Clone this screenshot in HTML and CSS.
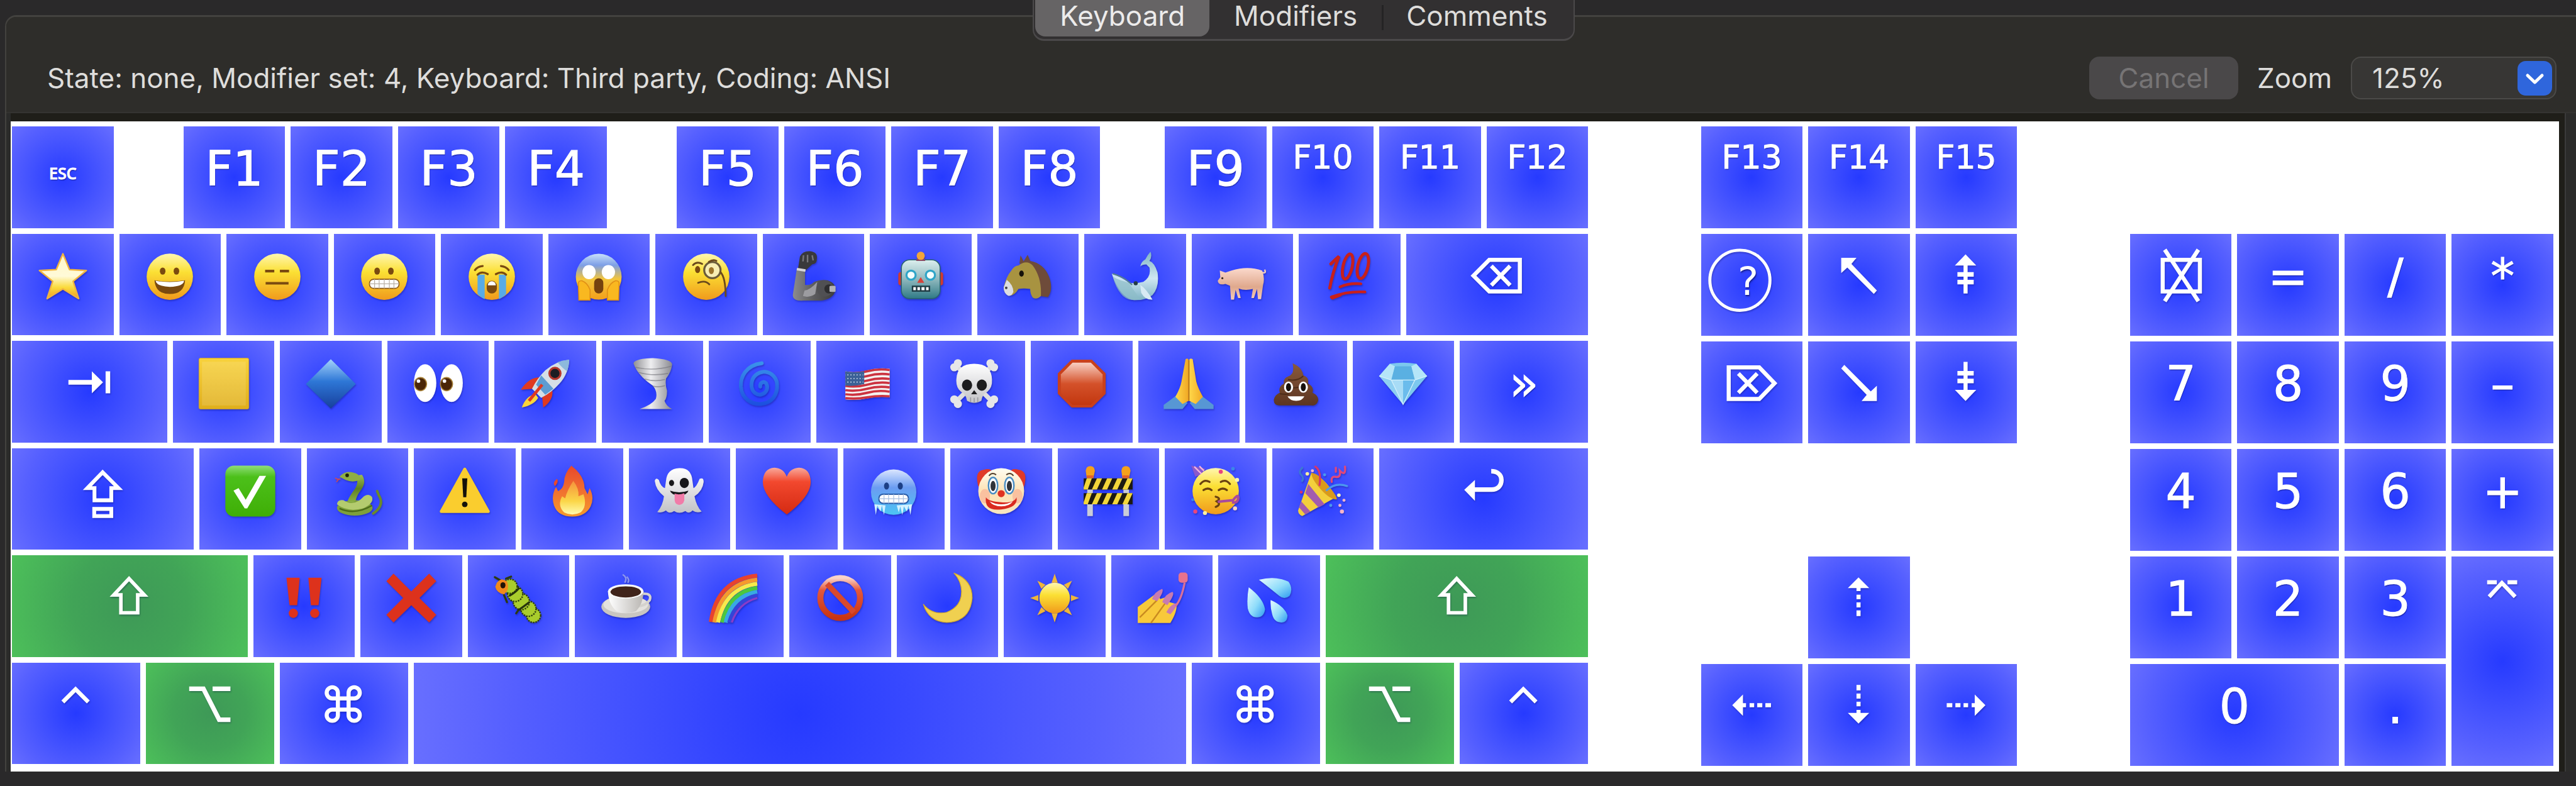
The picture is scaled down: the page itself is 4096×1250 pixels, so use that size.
FILE: index.html
```html
<!DOCTYPE html>
<html lang="en">
<head>
<meta charset="utf-8">
<title>Keyboard layout</title>
<link rel="stylesheet" href="styles.css">
</head>
<body>
<svg class="defs" width="0" height="0" aria-hidden="true">
  <defs>
    <linearGradient id="gFace" x1="0" y1="0" x2="0" y2="1"><stop offset="0" stop-color="#fff6b0"/><stop offset=".4" stop-color="#fbe034"/><stop offset="1" stop-color="#f09a1c"/></linearGradient>
    <linearGradient id="gStar" x1="0" y1="0" x2="0" y2="1"><stop offset="0" stop-color="#fff7c8"/><stop offset=".5" stop-color="#fffad8"/><stop offset=".75" stop-color="#fadb3c"/><stop offset="1" stop-color="#ee9c22"/></linearGradient>
    <linearGradient id="gScream" x1="0" y1="0" x2="0" y2="1"><stop offset="0" stop-color="#c8e0fa"/><stop offset=".25" stop-color="#7d9fe6"/><stop offset=".55" stop-color="#f4c53a"/><stop offset="1" stop-color="#f2a01c"/></linearGradient>
    <linearGradient id="gCold" x1="0" y1="0" x2="0" y2="1"><stop offset="0" stop-color="#dbe6ff"/><stop offset=".4" stop-color="#6b9cf2"/><stop offset="1" stop-color="#4cc4f4"/></linearGradient>
    <linearGradient id="gGold" x1="0" y1="0" x2="0" y2="1"><stop offset="0" stop-color="#f8d23c"/><stop offset="1" stop-color="#dfae1c"/></linearGradient>
    <linearGradient id="gBlue" x1="0" y1="0" x2="0" y2="1"><stop offset="0" stop-color="#a5d3fb"/><stop offset=".45" stop-color="#2e77d6"/><stop offset="1" stop-color="#173f9c"/></linearGradient>
    <linearGradient id="gSteel" x1="0" y1="0" x2="1" y2="0"><stop offset="0" stop-color="#8c8c8e"/><stop offset=".5" stop-color="#5b5b5d"/><stop offset="1" stop-color="#3c3c3e"/></linearGradient>
    <linearGradient id="gRobot" x1="0" y1="0" x2="0" y2="1"><stop offset="0" stop-color="#dcefee"/><stop offset=".5" stop-color="#8fb8bd"/><stop offset="1" stop-color="#2f7a86"/></linearGradient>
    <linearGradient id="gWhale" x1="0" y1="0" x2="0" y2="1"><stop offset="0" stop-color="#7fb5c4"/><stop offset=".55" stop-color="#cfe6f2"/><stop offset="1" stop-color="#7fb4c4"/></linearGradient>
    <linearGradient id="gPig" x1="0" y1="0" x2="0" y2="1"><stop offset="0" stop-color="#fbd9cc"/><stop offset=".6" stop-color="#dfa88c"/><stop offset="1" stop-color="#f7cdbb"/></linearGradient>
    <linearGradient id="gTornado" x1="0" y1="0" x2="1" y2="0"><stop offset="0" stop-color="#8f8f93"/><stop offset=".45" stop-color="#eeeef0"/><stop offset="1" stop-color="#8a8a90"/></linearGradient>
    <linearGradient id="gCyclone" x1="0" y1="0" x2="0" y2="1"><stop offset="0" stop-color="#3a92ea"/><stop offset="1" stop-color="#1c50e0"/></linearGradient>
    <linearGradient id="gBone" x1="0" y1="0" x2="0" y2="1"><stop offset="0" stop-color="#ffffff"/><stop offset="1" stop-color="#c2c2c6"/></linearGradient>
    <linearGradient id="gStop" x1="0" y1="0" x2="0" y2="1"><stop offset="0" stop-color="#f8cfc2"/><stop offset=".5" stop-color="#d4512a"/><stop offset="1" stop-color="#c2370f"/></linearGradient>
    <linearGradient id="gHand" x1="0" y1="0" x2="1" y2="0"><stop offset="0" stop-color="#ffd84a"/><stop offset="1" stop-color="#f0a824"/></linearGradient>
    <linearGradient id="gPoop" x1="0" y1="0" x2="0" y2="1"><stop offset="0" stop-color="#8a5a3c"/><stop offset="1" stop-color="#5c3521"/></linearGradient>
    <linearGradient id="gCheck" x1="0" y1="0" x2="0" y2="1"><stop offset="0" stop-color="#8fdd78"/><stop offset=".22" stop-color="#4cc01a"/><stop offset="1" stop-color="#3fae06"/></linearGradient>
    <linearGradient id="gSnake" x1="0" y1="0" x2="0" y2="1"><stop offset="0" stop-color="#9cbd52"/><stop offset=".5" stop-color="#5f7f22"/><stop offset="1" stop-color="#8db246"/></linearGradient>
    <linearGradient id="gFire" x1="0" y1="0" x2="0" y2="1"><stop offset="0" stop-color="#e8482c"/><stop offset=".5" stop-color="#f07030"/><stop offset="1" stop-color="#f59a2c"/></linearGradient>
    <linearGradient id="gFlame" x1="0" y1="0" x2="0" y2="1"><stop offset="0" stop-color="#f5923c"/><stop offset=".6" stop-color="#fbd648"/><stop offset="1" stop-color="#fffbb0"/></linearGradient>
    <linearGradient id="gHeart" x1="0" y1="0" x2="0" y2="1"><stop offset="0" stop-color="#f9a99c"/><stop offset=".3" stop-color="#f2482e"/><stop offset="1" stop-color="#d42a12"/></linearGradient>
    <linearGradient id="gClown" x1="0" y1="0" x2="0" y2="1"><stop offset="0" stop-color="#fffdf2"/><stop offset=".5" stop-color="#ffe3b4"/><stop offset="1" stop-color="#f6e6c0"/></linearGradient>
    <linearGradient id="gCup" x1="0" y1="0" x2="1" y2="0"><stop offset="0" stop-color="#ffffff"/><stop offset="1" stop-color="#b9b6b2"/></linearGradient>
    <linearGradient id="gBan" x1="0" y1="0" x2="0" y2="1"><stop offset="0" stop-color="#fad3c8"/><stop offset=".3" stop-color="#e4583c"/><stop offset="1" stop-color="#c83412"/></linearGradient>
    <linearGradient id="gDrop" x1="0" y1="0" x2="1" y2="1"><stop offset="0" stop-color="#e8fbff"/><stop offset=".55" stop-color="#8edcfa"/><stop offset="1" stop-color="#2d9af0"/></linearGradient>
    <circle id="face" cx="50" cy="50" r="45.5" fill="url(#gFace)"/>
    <g id="dash-arrow" fill="#fff"><path d="M0-38L21-17H4V-11H-4V-17H-21z"/><path d="M-4-4h8v9h-8zM-4 11h8v10h-8zM-4 27h8v11h-8z"/></g>
    <path id="shift-arrow" d="M49 12L19 44H33V79H66V44H79z" fill="none" stroke="#fff" stroke-width="7"/>
    <path id="command" d="M38 69V25a11 11 0 1 0-11 11H70a11 11 0 1 0-11-11V69a11 11 0 1 0 11-11H27a11 11 0 1 0 11 11z" fill="none" stroke="#fff" stroke-width="8"/>
    <path id="option" d="M9 17H37L68 78H90M55 17H90" fill="none" stroke="#fff" stroke-width="9"/>
    <path id="control" d="M24 43L49 18L74 43" fill="none" stroke="#fff" stroke-width="8"/>
    <path id="diagonal" d="M15 13H45L35 25 85 77 79 84 27 32 15 43z" fill="#fff"/>
  </defs>
</svg>

<nav class="tabs-bar" aria-label="Views">
  <div class="tabs">
    <button class="tab tab-on" type="button">Keyboard</button>
    <button class="tab" type="button">Modifiers</button>
    <button class="tab tab-split" type="button">Comments</button>
  </div>
</nav>

<main class="panel">
  <div class="toolbar">
    <p class="status">State: none, Modifier set: 4, Keyboard: Third party, Coding: ANSI</p>
    <button class="cancel" type="button" disabled>Cancel</button>
    <label class="zoom-label" for="zoom">Zoom</label>
    <span class="combo">
      <select id="zoom"><option>125%</option></select>
      <svg class="combo-arrow" viewBox="0 0 55 55" aria-hidden="true"><rect width="55" height="55" rx="13" fill="#2f66dc"/><path d="M16 23L27.500 34L39 23" fill="none" stroke="#fff" stroke-width="5" stroke-linecap="round" stroke-linejoin="round"/></svg>
    </span>
  </div>

  <div class="scroller">
    <div class="board">
      <section class="block main-block" aria-label="Main keys">
        <button class="key u100 esc">ESC</button>
        <button class="key u100 f1">F1</button><button class="key u100">F2</button><button class="key u100">F3</button><button class="key u100">F4</button>
        <button class="key u100 f5">F5</button><button class="key u100">F6</button><button class="key u100">F7</button><button class="key u100">F8</button>
        <button class="key u100 f9">F9</button><button class="key u100 small">F10</button><button class="key u100 small">F11</button><button class="key u100 small">F12</button>

        <button class="key u100" aria-label="star"><svg viewBox="-50 -34 200 200"><path d="M50 5L63 36 96 38 70 59 81 93 50 74 19 93 30 59 4 38 37 36z" fill="url(#gStar)" stroke="#f0b440" stroke-width="3" stroke-linejoin="round"/></svg></button>
        <button class="key u100" aria-label="grin"><svg viewBox="-50 -34 200 200"><use href="#face"/><g fill="#7a4a10"><ellipse cx="36" cy="39" rx="5.500" ry="7"/><ellipse cx="63" cy="39" rx="5.500" ry="7"/><path d="M20 57Q50 62 80 57Q78 84 50 84Q22 84 20 57z"/></g><path d="M22 58Q50 63 78 58Q77 69 50 70Q24 69 22 58z" fill="#fff"/></svg></button>
        <button class="key u100" aria-label="expressionless"><svg viewBox="-50 -34 200 200"><use href="#face"/><path d="M26 39H44M55 39H73M27 63H72" stroke="#7a4a10" stroke-width="5"/></svg></button>
        <button class="key u100" aria-label="grimace"><svg viewBox="-50 -34 200 200"><use href="#face"/><g fill="#7a4a10"><ellipse cx="36" cy="39" rx="5.500" ry="7"/><ellipse cx="63" cy="39" rx="5.500" ry="7"/></g><rect x="21" y="55" width="58" height="18" rx="8" fill="#fff" stroke="#8a5a1c" stroke-width="2"/><path d="M21 64H79M31 55V73M40 55V73M50 55V73M60 55V73M69 55V73" stroke="#b9b0a4" stroke-width="1.500"/></svg></button>
        <button class="key u100" aria-label="sob"><svg viewBox="-50 -34 200 200"><use href="#face"/><g fill="#58abe6"><path d="M22 46H36V94Q28 91 22 84z"/><path d="M64 46H78V84Q72 91 64 94z"/></g><path d="M17 37Q22 30 32 29M83 37Q78 30 68 29M22 46Q30 38 42 45M78 46Q70 38 58 45" fill="none" stroke="#7a4a10" stroke-width="4" stroke-linecap="round"/><rect x="40" y="58" width="20" height="25" rx="10" fill="#7a4a10"/><path d="M42 67a8 8 0 0 1 16 0z" fill="#fff"/></svg></button>
        <button class="key u100" aria-label="scream"><svg viewBox="-50 -34 200 200"><circle cx="50" cy="50" r="45" fill="url(#gScream)"/><ellipse cx="31" cy="41" rx="13" ry="14" fill="#fff"/><ellipse cx="69" cy="41" rx="13" ry="14" fill="#fff"/><rect x="41" y="53" width="18" height="30" rx="9" fill="#75420f"/><path d="M11 96L10 66Q9 57 17 58Q28 62 33 76V96zM89 96L90 66Q91 57 83 58Q72 62 67 76V96z" fill="#f9b820" stroke="#e08f16" stroke-width="2"/></svg></button>
        <button class="key u100" aria-label="monocle"><svg viewBox="-50 -34 200 200"><use href="#face"/><ellipse cx="33" cy="36" rx="5" ry="7" fill="#7a4a10"/><circle cx="62" cy="37" r="16" fill="#f7eeb4" stroke="#6b5c3a" stroke-width="4"/><ellipse cx="60" cy="38" rx="5" ry="7" fill="#9c742a"/><path d="M24 27Q32 19 42 25M55 21Q64 15 70 19M34 62Q48 56 56 65M78 41Q88 52 88 88" fill="none" stroke="#6b4a1c" stroke-width="3.500" stroke-linecap="round"/></svg></button>
        <button class="key u100" aria-label="mechanical arm"><svg viewBox="-50 -34 200 200"><path d="M18 34H34L34 66Q44 68 52 60Q64 55 78 57Q94 62 94 76Q90 94 66 97L30 97Q10 98 10 86z" fill="url(#gSteel)"/><path d="M33 77Q44 76 58 60L54 84Q42 92 30 88z" fill="#9c9ca0"/><circle cx="73" cy="73" r="16" fill="#505053"/><circle cx="81" cy="74" r="9" fill="#2d2d2f"/><rect x="82" y="68" width="12" height="12" rx="2" fill="#b4b4b8"/><path d="M20 36L24 10Q30-1 44 0Q60 2 57 16Q58 24 48 26L36 37z" fill="#39393b"/><path d="M31 8L30 20M39 7V22M48 8L50 18" stroke="#77777b" stroke-width="3"/><path d="M18 35L35 38" stroke="#d6d6da" stroke-width="5"/></svg></button>
        <button class="key u100" aria-label="robot"><svg viewBox="-50 -34 200 200"><rect x="6" y="41" width="12" height="26" rx="5" fill="#cf3b30"/><rect x="82" y="41" width="12" height="26" rx="5" fill="#cf3b30"/><rect x="12" y="17" width="76" height="76" rx="16" fill="url(#gRobot)" stroke="#2b6470" stroke-width="2"/><path d="M41 19Q42 11 50 11T59 19z" fill="#8a4860"/><circle cx="50" cy="9" r="8" fill="#f2a53a"/><g fill="#f4ffff" stroke="#2fa5c8" stroke-width="4"><circle cx="31" cy="47" r="9"/><circle cx="69" cy="47" r="9"/></g><path d="M50 51L57 62H43z" fill="#d8423a"/><rect x="34" y="69" width="33" height="9" fill="#fff" stroke="#1f3c44" stroke-width="3"/><path d="M42 69V78M50 69V78M59 69V78" stroke="#1f3c44" stroke-width="3"/></svg></button>
        <button class="key u100" aria-label="horse"><svg viewBox="-50 -34 200 200"><path d="M34 24L36 8 42 20 50 7 55 19Q82 24 92 50Q101 74 90 90L74 88 58 34z" fill="#6e4b3a"/><path d="M32 28Q48 16 60 28Q78 52 76 88Q68 96 60 91Q55 84 55 74Q42 72 32 74Q24 88 13 87Q3 83 3 71Q8 50 18 38Q24 28 32 28z" fill="#a89340"/><path d="M9 56Q22 66 22 80Q18 90 11 87Q3 82 3 71z" fill="#dcdde2"/><ellipse cx="38" cy="44" rx="4.500" ry="6" fill="#16120a"/><circle cx="8" cy="72" r="2.500" fill="#444"/></svg></button>
        <button class="key u100" aria-label="whale"><svg viewBox="-50 -34 200 200"><path d="M80 1Q84 10 78 19Q88 22 94 42Q98 70 84 86Q70 97 48 96Q20 92 4 44Q26 52 38 62Q52 64 66 60Q82 50 78 32L72 26Q64 26 60 30Q62 20 70 16Q74 8 80 1z" fill="url(#gWhale)"/><path d="M6 50Q20 58 38 62Q46 76 60 94Q40 100 26 88Q12 74 6 50z" fill="#8dbcc8" opacity=".7"/><path d="M60 66Q72 74 84 95Q70 96 62 82z" fill="#d8ebf4"/><circle cx="51" cy="63" r="4" fill="#243c44"/><path d="M6 44Q28 50 44 66" fill="none" stroke="#55808c" stroke-width="2.500"/></svg></button>
        <button class="key u100" aria-label="pig"><svg viewBox="-50 -34 200 200"><path d="M28 38Q60 28 88 38Q94 52 90 66L86 94H80L78 74L72 92H67L70 74Q54 78 42 73L46 92H41L36 76L33 95H27L25 68L16 64Q2 68 1 58L6 51L5 38L16 42z" fill="url(#gPig)"/><path d="M88 42Q97 44 93 36" fill="none" stroke="#f4cdbc" stroke-width="3"/><circle cx="10" cy="53" r="2" fill="#3a2a24"/></svg></button>
        <button class="key u100" aria-label="hundred"><svg viewBox="-50 -34 200 200"><g fill="none" stroke="#c8201c" stroke-linecap="round"><path d="M13 25Q22 16 29 10Q16 44 11 72" stroke-width="6"/><ellipse cx="46" cy="30" rx="9" ry="25" transform="rotate(13 46 30)" stroke-width="6"/><ellipse cx="76" cy="29" rx="10" ry="25" transform="rotate(13 76 29)" stroke-width="6"/><path d="M31 70Q50 62 72 64M14 90Q46 78 80 80M16 92L32 86" stroke-width="5.500"/></g></svg></button>
        <button class="key u175" aria-label="delete backward"><svg viewBox="-50 -34 200 200"><path d="M34 17H94V79H34L3 48zM38 29L75 67M75 29L38 67" fill="none" stroke="#fff" stroke-width="8"/></svg></button>

        <button class="key u150" aria-label="tab"><svg viewBox="-50 -34 200 200"><path d="M9 43H55V26L77 47.500 55 69V52H9zM82 26H91V69H82z" fill="#fff"/></svg></button>
        <button class="key u100" aria-label="yellow square"><svg viewBox="-50 -34 200 200"><rect x="1" width="98" height="100" rx="3" fill="url(#gGold)" stroke="#cfa02a"/><rect x="7" y="7" width="86" height="86" fill="#fff" opacity=".12"/></svg></button>
        <button class="key u100" aria-label="blue diamond"><svg viewBox="-50 -34 200 200"><path d="M50 2L99 51 50 99 1 51z" fill="url(#gBlue)"/></svg></button>
        <button class="key u100" aria-label="eyes"><svg viewBox="-50 -34 200 200"><ellipse cx="24" cy="49" rx="22" ry="37" fill="#fff"/><ellipse cx="76" cy="49" rx="22" ry="37" fill="#fff"/><g fill="#4a2608" stroke="#a8823a" stroke-width="2"><ellipse cx="15" cy="51" rx="12" ry="13"/><ellipse cx="66" cy="51" rx="12" ry="13"/></g><circle cx="11" cy="45" r="3.500" fill="#fff"/><circle cx="62" cy="45" r="3.500" fill="#fff"/></svg></button>
        <button class="key u100" aria-label="rocket"><svg viewBox="-50 -34 200 200"><path d="M31 71Q12 74 4 97Q28 92 36 78z" fill="#fbd63a"/><path d="M38 38Q18 38 2 62L26 60zM64 64Q66 82 46 97L44 76z" fill="#e03a20"/><path d="M97 3Q70 6 50 24Q34 40 24 60L42 78Q62 68 78 50Q96 30 97 3z" fill="#d5dfe6"/><path d="M42 34L66 60L50 72L32 52z" fill="#5d9cd2"/><path d="M97 3Q84 4 74 8Q84 20 93 26Q97 14 97 3z" fill="#8db9dc"/><circle cx="69" cy="30" r="11" fill="#1d1d22" stroke="#b4362c" stroke-width="4"/><path d="M18 84L44 52" stroke="#e03a20" stroke-width="6"/></svg></button>
        <button class="key u100" aria-label="tornado"><svg viewBox="-50 -34 200 200"><path d="M12 10Q14 1 50 0Q86 2 88 12Q86 28 76 40Q74 52 78 64Q78 78 73 84Q76 94 88 100H24Q48 92 56 80Q60 66 50 54Q20 34 12 10z" fill="url(#gTornado)"/><path d="M16 18Q50 26 86 16M22 28Q50 36 80 30M34 41Q54 47 74 42M50 55Q62 58 74 54" fill="none" stroke="#737379" stroke-width="2" opacity=".6"/></svg></button>
        <button class="key u100" aria-label="cyclone"><svg viewBox="-50 -34 200 200"><path d="M54 10C22 14 12 38 13 56C15 80 34 91 52 90C74 88 86 72 84 50C82 34 68 26 56 27C38 30 33 44 34 56C36 68 46 74 54 71C64 68 67 58 63 50C58 44 50 48 51 56" fill="none" stroke="url(#gCyclone)" stroke-width="7.500" stroke-linecap="round"/></svg></button>
        <button class="key u100" aria-label="flag"><svg viewBox="-50 -34 200 200"><path d="M7 26Q28 30 50 24T94 21V77Q72 74 50 79T7 81z" fill="#f4f1f0"/><path d="M7 28.500Q28 32 50 26T94 23.500M7 37.500Q28 41 50 35T94 32M7 46Q28 50 50 44T94 41M7 54.500Q28 58 50 52T94 49M7 63Q28 66 50 60T94 57.500M7 71Q28 74 50 68T94 66M7 78.500Q28 81 50 77T94 75" fill="none" stroke="#cc3340" stroke-width="4.500"/><path d="M7 26Q26 30 44 25.500V51Q26 56 7 54z" fill="#3c6196"/><path d="M11 33H42M11 40H42M11 47H42" stroke="#dce6f4" stroke-width="2" stroke-dasharray="2 4"/></svg></button>
        <button class="key u100" aria-label="skull"><svg viewBox="-50 -34 200 200"><path d="M14 14L86 86M86 14L14 86" stroke="#dededf" stroke-width="9"/><g fill="#e6e6e8"><circle cx="11" cy="18" r="8"/><circle cx="18" cy="10" r="8"/><circle cx="82" cy="10" r="8"/><circle cx="89" cy="18" r="8"/><circle cx="11" cy="81" r="8"/><circle cx="18" cy="90" r="8"/><circle cx="82" cy="90" r="8"/><circle cx="89" cy="81" r="8"/></g><path d="M15 42Q16 11 50 11T85 42Q86 58 76 66Q66 70 64 84Q50 92 36 84Q34 70 24 66Q14 58 15 42z" fill="url(#gBone)"/><ellipse cx="36" cy="53" rx="10" ry="11" fill="#1c1c1e"/><ellipse cx="65" cy="53" rx="10" ry="11" fill="#1c1c1e"/><path d="M50 63L56 71H44z" fill="#1c1c1e"/><path d="M43 77V87M50 78V88M57 77V87" stroke="#9a9aa0" stroke-width="2"/></svg></button>
        <button class="key u100" aria-label="stop"><svg viewBox="-50 -34 200 200"><path d="M30 3H70L97 30V70L70 97H30L3 70V30z" fill="#c8401c"/><path d="M32 9H68L91 32V69L68 92H32L9 69V32z" fill="url(#gStop)"/></svg></button>
        <button class="key u100" aria-label="folded hands"><svg viewBox="-50 -34 200 200"><path d="M28 72L48 88L38 100H1V92zM73 72L52 88L62 100H99V92z" fill="#5797d4"/><path d="M44 2Q49-1 50 4V84L38 90L24 76Q34 58 36 46z" fill="url(#gHand)"/><path d="M58 2Q52-1 51 4V84L64 90L78 76Q68 58 65 46z" fill="url(#gHand)"/><path d="M50.500 4V84" stroke="#b8761c" stroke-width="2.500"/></svg></button>
        <button class="key u100" aria-label="poop"><svg viewBox="-50 -34 200 200"><path d="M43 10Q62 18 64 34Q76 38 73 50Q86 56 82 68Q95 74 93 84Q90 94 80 93H18Q6 93 6 82Q8 72 18 68Q14 56 26 50Q24 40 34 36Q48 32 43 10z" fill="url(#gPoop)"/><path d="M34 42Q52 46 64 35M24 57Q50 62 74 51M18 70Q30 72 36 70" fill="none" stroke="#40230f" stroke-width="2.500" opacity=".7"/><g fill="#fff"><ellipse cx="35" cy="57" rx="9" ry="11"/><ellipse cx="64" cy="57" rx="9" ry="11"/><path d="M33 75H66Q62 84 50 84T33 75z"/></g><ellipse cx="35" cy="57" rx="5" ry="8" fill="#17100c"/><ellipse cx="64" cy="57" rx="5" ry="8" fill="#17100c"/></svg></button>
        <button class="key u100" aria-label="gem"><svg viewBox="-50 -34 200 200"><path d="M24 11Q50 7 76 11L97 35 50 91 3 35z" fill="#7cc8ee"/><path d="M24 11L34 16 27 43 3 35zM76 11L66 16 73 43 97 35z" fill="#b5e5f8"/><path d="M34 16H66L73 43H27z" fill="#5ab0e2"/><path d="M27 43H50V91z" fill="#a8dcf6"/><path d="M73 43H50V91z" fill="#6bbcec"/><path d="M3 35L27 43 50 91z" fill="#8fd0f2"/><path d="M3 35L27 43H73L97 35M27 43L50 91 73 43" fill="none" stroke="#d4f1fc" stroke-width="1.500"/></svg></button>
        <button class="key u125">»</button>

        <button class="key u175" aria-label="caps lock"><svg viewBox="-50 -34 200 200"><path d="M49 13L19 44H33V68H66V44H80zM32.500 85H66V99H32.500z" fill="none" stroke="#fff" stroke-width="7.500"/></svg></button>
        <button class="key u100" aria-label="check mark"><svg viewBox="-50 -34 200 200"><rect x="1" width="98" height="100" rx="17" fill="url(#gCheck)"/><path d="M17 49L27 44 41 67 68 20H81L44 84H39z" fill="#fff"/></svg></button>
        <button class="key u100" aria-label="snake"><svg viewBox="-50 -34 200 200"><path d="M80 94Q100 80 94 64Q90 56 88 50" fill="none" stroke="#6c8a2a" stroke-width="5" stroke-linecap="round"/><ellipse cx="44" cy="83" rx="35" ry="15" fill="#7ea03a"/><path d="M9 76Q10 66 22 68Q42 82 62 60Q72 54 78 62Q82 74 60 84Q30 92 9 76z" fill="#b4cb6e"/><path d="M44 20Q54 30 44 46Q32 62 30 70Q40 76 46 68Q48 58 56 48Q68 32 58 18z" fill="url(#gSnake)"/><path d="M14 22Q24 10 38 13Q56 16 54 28Q40 34 26 28z" fill="#8fae44"/><circle cx="29" cy="19" r="3.500" fill="#1d2408"/><path d="M16 26Q8 28 6 24M12 27L8 32" fill="none" stroke="#d4484e" stroke-width="2"/><path d="M14 84Q44 98 78 78" fill="none" stroke="#4c6a18" stroke-width="3"/></svg></button>
        <button class="key u100" aria-label="warning"><svg viewBox="-50 -34 200 200"><path d="M50 7L96 90H4z" fill="#facd2e" stroke="#facd2e" stroke-width="6" stroke-linejoin="round"/><path d="M45 25H55L53 62H47z" fill="#15120a"/><circle cx="50" cy="76" r="5.500" fill="#15120a"/></svg></button>
        <button class="key u100" aria-label="fire"><svg viewBox="-50 -34 200 200"><path d="M48 0Q74 20 74 44L80 56L84 44Q94 62 86 80Q76 100 50 100Q22 100 14 78Q8 60 18 42L22 50Q32 46 34 32Q34 16 48 0z" fill="url(#gFire)"/><path d="M20 26Q24 32 16 40Q10 34 20 26z" fill="#e8482c"/><path d="M52 30Q64 46 62 60L72 56Q80 80 66 92Q50 100 34 92Q20 78 30 60L36 64Q40 48 52 30z" fill="url(#gFlame)"/></svg></button>
        <button class="key u100" aria-label="ghost"><svg viewBox="-50 -34 200 200"><path d="M24 30Q26 6 50 5T76 30L78 44Q84 42 90 26Q98 22 98 32Q96 50 80 60Q84 80 94 90Q84 94 76 88Q70 96 62 89Q50 96 40 89Q30 96 24 88Q14 94 7 91Q18 78 20 60Q4 48 2 30Q4 22 10 28Q14 42 22 44z" fill="url(#gBone)"/><ellipse cx="35" cy="34" rx="5" ry="6" fill="#17171a"/><ellipse cx="60" cy="34" rx="9" ry="10" fill="#17171a"/><path d="M32 49Q50 56 68 49Q66 58 50 58T32 49z" fill="#17171a"/><path d="M41 55Q50 58 60 54V68Q58 77 50 77T41 68z" fill="#f17ba8"/></svg></button>
        <button class="key u100" aria-label="heart"><svg viewBox="-50 -34 200 200"><path d="M50 96Q3 60 3 32Q4 5 26 4Q44 5 50 22Q56 5 74 4Q96 5 97 32Q97 60 50 96z" fill="url(#gHeart)"/></svg></button>
        <button class="key u100" aria-label="cold face"><svg viewBox="-50 -34 200 200"><circle cx="50" cy="52" r="44.500" fill="url(#gCold)"/><ellipse cx="36" cy="40" rx="5" ry="7" fill="#1c3f86"/><ellipse cx="63" cy="40" rx="5" ry="7" fill="#1c3f86"/><rect x="21" y="56" width="58" height="18" rx="8" fill="#fff" stroke="#2a5ca8" stroke-width="2.500"/><path d="M21 65H79M31 56V74M40 56V74M50 56V74M60 56V74M69 56V74" stroke="#a9c0e0" stroke-width="1.500"/><path d="M12 76L15 97 18 78 24 90 27 78 31 97 34 78zM56 78L60 92 63 80 67 97 70 80 76 90 79 78 83 97 86 76z" fill="#d4f2ff"/></svg></button>
        <button class="key u100" aria-label="clown"><svg viewBox="-50 -34 200 200"><path d="M3 30Q0 10 16 8Q30 4 34 14L14 52Q4 46 3 30zM97 30Q100 10 84 8Q70 4 66 14L86 52Q96 46 97 30z" fill="#df3a28"/><circle cx="50" cy="50" r="45" fill="url(#gClown)"/><ellipse cx="18" cy="60" rx="10" ry="14" fill="#f5a08a" opacity=".5"/><ellipse cx="82" cy="60" rx="10" ry="14" fill="#f5a08a" opacity=".5"/><g fill="#fff" stroke="#4a8ec4" stroke-width="3"><ellipse cx="34" cy="39" rx="9" ry="16"/><ellipse cx="66" cy="39" rx="9" ry="16"/></g><ellipse cx="34" cy="40" rx="5" ry="10" fill="#30343a"/><ellipse cx="66" cy="40" rx="5" ry="10" fill="#30343a"/><path d="M26 20Q32 12 40 18M60 18Q68 12 74 20" fill="none" stroke="#54402c" stroke-width="2.500"/><circle cx="50" cy="55" r="7" fill="#df3322"/><path d="M20 62Q24 70 50 72T80 62Q84 82 50 86T20 62z" fill="#d92b20"/><path d="M27 70Q50 82 73 70Q66 80 50 80T27 70z" fill="#fff"/></svg></button>
        <button class="key u100" aria-label="construction"><svg viewBox="-50 -34 200 200"><path d="M9 24H20V99H9zM80 24H91V99H80z" fill="#c9ccd8"/><g fill="#f5a11c"><path d="M6 10Q7 1 15 1T24 10L21 24H8zM76 10Q77 1 85 1T94 10L91 24H78z"/></g><path d="M8 19H21V25H8zM78 19H91V25H78z" fill="#e2622a"/><path d="M2 25H98V47H2zM2 54H98V76H2z" fill="#1d1a12"/><path d="M8 25H18L10 47H2V43zM28 25H38L28 47H18zM48 25H58L48 47H38zM68 25H78L68 47H58zM88 25H98L88 47H78zM8 54H18L10 76H2V72zM28 54H38L28 76H18zM48 54H58L48 76H38zM68 54H78L68 76H58zM88 54H98L88 76H78z" fill="#f3d63a"/></svg></button>
        <button class="key u100" aria-label="party face"><svg viewBox="-50 -34 200 200"><use href="#face"/><path d="M2 0L30 6Q22 18 10 22z" fill="#8a58cc"/><path d="M8 2L22 16M18 1L27 10" stroke="#f2b4dc" stroke-width="3"/><g fill="none" stroke="#6a4210" stroke-width="4" stroke-linecap="round"><path d="M20 36Q28 26 38 32M60 32Q70 26 78 36M26 48Q35 42 42 48M56 48Q64 42 72 48M50 61Q62 64 52 70Q62 76 50 81"/></g><path d="M54 71L84 68Q96 52 94 66Q92 74 82 72" fill="none" stroke="#a84a9c" stroke-width="5"/><g fill="#e8467c"><circle cx="10" cy="90" r="4"/><circle cx="60" cy="12" r="4"/></g><circle cx="84" cy="6" r="3.500" fill="#3c86e8"/><circle cx="92" cy="28" r="4" fill="#f7f3b4"/><circle cx="29" cy="93" r="4" fill="#fff0a0"/><circle cx="88" cy="84" r="4" fill="#f7d4c4"/><circle cx="5" cy="67" r="3" fill="#3c86e8"/></svg></button>
        <button class="key u100" aria-label="party popper"><svg viewBox="-50 -34 200 200"><path d="M28 14Q56 24 76 62L10 99Q2 96 2 88z" fill="#f3cf3c"/><path d="M22 36L54 76L42 82L16 54zM8 70L26 90L16 96L4 82z" fill="#a25cae"/><path d="M28 14Q40 14 58 36Q78 58 78 66Q66 68 46 46Q28 26 28 14z" fill="#d99a1c"/><g fill="none" stroke-width="4" stroke-linecap="round"><path d="M36 2Q48 10 44 38" stroke="#d6366c"/><path d="M68 32Q66 20 76 22T84 10Q96 22 94 2M76 4V12" stroke="#e2487a"/><path d="M58 48Q76 32 98 40" stroke="#4c98ee"/><path d="M10 4Q2 12 8 18T10 30" stroke="#3c78d6"/></g><g fill="#f6b6c8"><circle cx="92" cy="68" r="3"/><circle cx="84" cy="78" r="3"/><circle cx="88" cy="90" r="4"/><circle cx="30" cy="10" r="3"/></g><circle cx="82" cy="58" r="3.500" fill="#fff6c0"/><circle cx="20" cy="16" r="3.500" fill="#fff0a0"/><circle cx="8" cy="52" r="3" fill="#d6366c"/><circle cx="66" cy="78" r="3" fill="#4c98ee"/><circle cx="54" cy="18" r="3" fill="#4c98ee"/></svg></button>
        <button class="key u200" aria-label="return"><svg viewBox="-50 -34 200 200"><path d="M65 11C76 11 85 17 85 28C85 40 77 47 66 47H30" fill="none" stroke="#fff" stroke-width="9"/><path d="M12 47.500L33 28V69z" fill="#fff"/></svg></button>

        <button class="key u225 held" aria-label="shift"><svg viewBox="-50 -34 200 200"><use href="#shift-arrow"/></svg></button>
        <button class="key u100" aria-label="double exclamation"><svg viewBox="-50 -34 200 200"><g fill="#dd321c"><path d="M16 10H42L37 64H22zM59 10H85L79 64H64z"/><ellipse cx="29.500" cy="80" rx="9" ry="9"/><ellipse cx="71.500" cy="80" rx="9" ry="9"/></g></svg></button>
        <button class="key u100" aria-label="cross mark"><svg viewBox="-50 -34 200 200"><path d="M15 2L50 37 85 2 99 17 66 50 99 83 85 98 50 64 15 98 1 83 34 50 1 17z" fill="#dd321c"/></svg></button>
        <button class="key u100" aria-label="caterpillar"><svg viewBox="-50 -34 200 200"><path d="M16 16L4 9M26 12L36 8M22 44L28 58M54 68L46 80" stroke="#2c3a10" stroke-width="4" stroke-linecap="round"/><g fill="#a9cc2c" stroke="#31400e" stroke-width="3" stroke-dasharray="3 2"><circle cx="80" cy="84" r="14"/><circle cx="70" cy="71" r="15"/><circle cx="56" cy="57" r="16"/><circle cx="44" cy="42" r="15"/><circle cx="34" cy="27" r="14"/></g><path d="M8 20Q18 8 28 18Q34 34 22 43Q8 40 5 28z" fill="#f08a1c"/><ellipse cx="20" cy="25" rx="5" ry="6" fill="#201406"/><path d="M32 46Q44 40 52 30M50 74Q62 66 72 58" fill="none" stroke="#27330c" stroke-width="4"/></svg></button>
        <button class="key u100" aria-label="coffee"><svg viewBox="-50 -34 200 200"><path d="M44 4Q54 10 48 20M52 8Q58 14 54 20" fill="none" stroke="#8b94f0" stroke-width="3"/><ellipse cx="50" cy="67" rx="48" ry="22" fill="#c9c6c1"/><ellipse cx="50" cy="63" rx="44" ry="17" fill="#e4e2de"/><path d="M82 42Q102 40 97 54Q90 64 76 66" fill="none" stroke="#d4d2ce" stroke-width="5"/><path d="M15 37H85Q84 62 70 76Q50 84 32 76Q16 62 15 37z" fill="url(#gCup)"/><ellipse cx="50" cy="37" rx="35" ry="14" fill="#fbfbfa"/><ellipse cx="50" cy="38" rx="30" ry="11" fill="#40241a"/></svg></button>
        <button class="key u100" aria-label="rainbow"><svg viewBox="-50 -34 200 200"><g fill="none" stroke-width="8"><path d="M6 97Q18 14 97 6" stroke="#e8432e"/><path d="M13 98Q26 22 97 14" stroke="#f69a2c"/><path d="M20 98Q34 30 97 22" stroke="#f7ea4a"/><path d="M28 98Q42 38 97 30" stroke="#4cc83c"/><path d="M35 98Q48 46 97 38" stroke="#38a8e4"/><path d="M42 98Q55 54 97 45" stroke="#3444d8"/><path d="M47 98Q60 60 97 50" stroke="#8a3cc8" stroke-width="4"/></g></svg></button>
        <button class="key u100" aria-label="prohibited"><svg viewBox="-50 -34 200 200"><circle cx="50" cy="50" r="39" fill="none" stroke="url(#gBan)" stroke-width="12"/><path d="M24 22L77 78" stroke="#d9492c" stroke-width="11"/></svg></button>
        <button class="key u100" aria-label="moon"><svg viewBox="-50 -34 200 200"><path d="M62 1Q98 14 98 50Q94 96 48 98Q12 96 2 62Q20 84 48 78Q78 66 77 36Q76 16 62 1z" fill="#f0d050" stroke="#d3a92c" stroke-width="1.500"/></svg></button>
        <button class="key u100" aria-label="sun"><svg viewBox="-50 -34 200 200"><path d="M50 2L56 20H44zM50 98L56 80H44zM2 50L18 44V56zM98 50L82 44V56zM16 16L32 24 24 32zM84 16L76 32 68 24zM16 84L24 68 32 76zM84 84L68 76 76 68z" fill="#efb63a"/><circle cx="50" cy="50" r="30" fill="url(#gFace)"/></svg></button>
        <button class="key u100" aria-label="nail polish"><svg viewBox="-50 -34 200 200"><path d="M2 68L34 44Q44 42 46 52L58 48Q66 50 64 58L78 62Q80 76 66 99H2z" fill="#f8c93a"/><path d="M6 88L40 54M28 99L56 60" stroke="#c98a20" stroke-width="3"/><path d="M30 52Q34 38 50 32Q54 38 40 56zM50 58Q56 42 70 38Q76 42 60 64zM58 78Q66 62 78 60Q80 66 66 82z" fill="#c77bb0"/><path d="M94 20Q88 52 76 66" fill="none" stroke="#d8709a" stroke-width="4"/><rect x="82" y="0" width="18" height="20" rx="6" fill="#e8728e"/></svg></button>
        <button class="key u100" aria-label="sweat drops"><svg viewBox="-50 -34 200 200"><g fill="url(#gDrop)"><path d="M30 14Q64 6 88 18Q98 32 90 46Q80 54 70 46Q56 34 30 14z"/><path d="M10 29Q38 50 42 72Q40 88 26 88Q12 88 8 70Q6 50 10 29z"/><path d="M53 54Q80 66 86 84Q86 98 74 98Q60 98 56 82Q52 68 53 54z"/></g></svg></button>
        <button class="key u250 held" aria-label="shift"><svg viewBox="-50 -34 200 200"><use href="#shift-arrow"/></svg></button>

        <button class="key u125" aria-label="control"><svg viewBox="-50 -34 200 200"><use href="#control"/></svg></button>
        <button class="key u125 held" aria-label="option"><svg viewBox="-50 -34 200 200"><use href="#option"/></svg></button>
        <button class="key u125" aria-label="command"><svg viewBox="-50 -34 200 200"><use href="#command"/></svg></button>
        <button class="key u725" aria-label="space"></button>
        <button class="key u125" aria-label="command"><svg viewBox="-50 -34 200 200"><use href="#command"/></svg></button>
        <button class="key u125 held" aria-label="option"><svg viewBox="-50 -34 200 200"><use href="#option"/></svg></button>
        <button class="key u125" aria-label="control"><svg viewBox="-50 -34 200 200"><use href="#control"/></svg></button>
      </section>

      <section class="block nav-block" aria-label="Navigation keys">
        <button class="key small">F13</button><button class="key small">F14</button><button class="key small">F15</button>
        <button class="key" aria-label="help"><svg viewBox="-50 -34 200 200"><circle cx="26" cy="57" r="59" fill="none" stroke="#fff" stroke-width="6"/><text class="help-mark" x="42" y="86">?</text></svg></button>
        <button class="key" aria-label="home"><svg viewBox="-50 -34 200 200"><use href="#diagonal"/></svg></button>
        <button class="key" aria-label="page up"><svg viewBox="-50 -34 200 200"><path d="M48 6L69 28H52V41H64V50H52V56H64V65H52V83H44V65H32V56H44V50H32V41H44V28H27z" fill="#fff"/></svg></button>
        <button class="key" aria-label="delete forward"><svg viewBox="-50 -34 200 200"><path d="M4 17H64L94 48L64 79H4zM23 29L60 67M60 29L23 67" fill="none" stroke="#fff" stroke-width="8"/></svg></button>
        <button class="key" aria-label="end"><svg viewBox="-50 -34 200 200"><use href="#diagonal" transform="rotate(180 50 48)"/></svg></button>
        <button class="key" aria-label="page down"><svg viewBox="-50 -34 200 200"><path d="M48 83L69 61H52V48H64V39H52V33H64V24H52V6H44V24H32V33H44V39H32V48H44V61H27z" fill="#fff"/></svg></button>
        <button class="key arrow-up" aria-label="up"><svg viewBox="-50 -34 200 200"><use href="#dash-arrow" transform="translate(49 45)"/></svg></button>
        <button class="key arrow-left" aria-label="left"><svg viewBox="-50 -34 200 200"><use href="#dash-arrow" transform="translate(49 47) rotate(-90)"/></svg></button>
        <button class="key arrow-down" aria-label="down"><svg viewBox="-50 -34 200 200"><use href="#dash-arrow" transform="translate(49 45) rotate(180)"/></svg></button>
        <button class="key arrow-right" aria-label="right"><svg viewBox="-50 -34 200 200"><use href="#dash-arrow" transform="translate(49 47) rotate(90)"/></svg></button>
      </section>

      <section class="block pad-block" aria-label="Number pad">
        <button class="key" aria-label="clear"><svg viewBox="-50 -34 200 200"><path d="M14 17H87V79H14zM18-3L84 98M84-3L18 98" fill="none" stroke="#fff" stroke-width="8"/></svg></button>
        <button class="key">=</button><button class="key">/</button><button class="key">*</button>
        <button class="key">7</button><button class="key">8</button><button class="key">9</button><button class="key">–</button>
        <button class="key">4</button><button class="key">5</button><button class="key">6</button><button class="key">+</button>
        <button class="key">1</button><button class="key">2</button><button class="key">3</button>
        <button class="key pad-enter" aria-label="enter"><svg viewBox="-50 -34 200 200"><path d="M24 45L49 18L75 45M20 16.500H39M60 16.500H79" fill="none" stroke="#fff" stroke-width="8"/></svg></button>
        <button class="key pad-zero">0</button><button class="key">.</button>
      </section>
    </div>
  </div>
</main>
</body>
</html>
```

FILE: styles.css
```css
* {
  box-sizing: border-box;
}

body {
  margin: 0;
  min-height: 100vh;
  background: #2a292a;
  color: #dedddb;
  font: 44px/50px Inter, "Liberation Sans", sans-serif;
}

button,
select {
  margin: 0;
  border: 0;
  color: inherit;
  font: inherit;
}

.defs {
  position: absolute;
}

/* Segmented view switcher, straddling the panel's top edge */
.tabs-bar {
  position: relative;
  z-index: 1;
  display: flex;
  justify-content: center;
  padding-left: 50px;
}

.tabs {
  display: flex;
  height: 65px;
  padding: 0 2px 4px;
  border: solid #4b494a;
  border-width: 0 2px 3px;
  border-radius: 0 0 18px 18px;
  background: #323031;
}

.tab {
  padding: 0 39px 8px;
  background: none;
}

.tab-on {
  border-radius: 0 0 16px 16px;
  background: #666465;
  color: #ecebeb;
}

.tab-split {
  background: linear-gradient(#242324, #242324) 0 8px / 3px 40px no-repeat;
}

.panel {
  margin: -41px 0 0 8px;
  border: solid #43423f;
  border-width: 3px 0 0 2px;
  border-radius: 18px 0 0 0;
  background: #2b2b2a;
}

.toolbar {
  display: flex;
  align-items: center;
  gap: 30px;
  padding: 63px 31px 20px 65px;
  border-bottom: 2px solid #343331;
  border-radius: 16px 0 0 0;
  background: #2e2d2a;
}

.status {
  flex: 1;
  margin: 0;
}

.cancel {
  width: 237px;
  height: 68px;
  border-radius: 16px;
  background: #4a4849;
  color: #767475;
}

.combo {
  position: relative;
  width: 327px;
}

.combo select {
  display: block;
  width: 100%;
  height: 68px;
  padding: 0 32px;
  border: 2px solid #4b4a48;
  border-radius: 16px;
  background: #373634;
  appearance: none;
}

.combo-arrow {
  position: absolute;
  top: 7px;
  right: 7px;
  width: 55px;
  pointer-events: none;
}

.scroller {
  margin: 0 16px 0 7px;
  padding: 13px 9px 0 0;
  border-right: 2px solid #3a3a3a;
  background: #1f1e19;
}

/* Columns are measured in key units, with a one-unit gutter between blocks */
.board {
  display: grid;
  grid-template-columns: 14.75fr 1fr 3fr 1fr 4fr;
  padding: 8px 0 0 2px;
  background: #fff;
}

.block {
  display: grid;
  grid-template-rows: repeat(6, minmax(0, 1fr));
  min-width: 0;
}

.main-block {
  grid-column: 1;
  grid-template-columns: repeat(295, minmax(0, 1fr));
  aspect-ratio: 14.75 / 6;
  min-height: 0;
}

.nav-block {
  grid-column: 3;
  grid-template-columns: repeat(3, minmax(0, 1fr));
}

.pad-block {
  grid-column: 5;
  grid-template-columns: repeat(4, minmax(0, 1fr));
}

/* The number pad has nothing beside the function keys */
.pad-block::before {
  grid-column: 1 / -1;
  content: "";
}

.key {
  display: flex;
  align-items: flex-start;
  justify-content: center;
  min-width: 0;
  min-height: 0;
  margin: 0 9px 9px 0;
  padding: 0;
  background: radial-gradient(circle farthest-corner, #263aff 0%, #4352ff 46%, #5660ff 75%, #686fff 100%);
  color: #fff;
  font: 76px/136px "DejaVu Sans", sans-serif;
  text-shadow: 1px 2px 1px rgb(0 0 60 / 0.35);
  -webkit-text-stroke: 1px #fff;
}

.key svg {
  flex: none;
  width: 162px;
  height: 162px;
  filter: drop-shadow(1px 2px 1px rgb(0 0 60 / 0.25));
}

.held {
  background: radial-gradient(circle farthest-corner, #3e9957 0%, #41a457 45%, #4dc05a 100%);
}

.small {
  font-size: 52px;
  line-height: 98px;
}

.esc {
  font: 500 25px/148px "Noto Sans", sans-serif;
}

.help-mark {
  fill: #fff;
  font: 77px "DejaVu Sans", sans-serif;
  text-anchor: middle;
}

/* Key widths in twentieths of a unit */
.u100 { grid-column-end: span 20; }
.u125 { grid-column-end: span 25; }
.u150 { grid-column-end: span 30; }
.u175 { grid-column-end: span 35; }
.u200 { grid-column-end: span 40; }
.u225 { grid-column-end: span 45; }
.u250 { grid-column-end: span 50; }
.u725 { grid-column-end: span 145; }

/* Function key groups start after a gap */
.f1 { grid-column-start: 33; }
.f5 { grid-column-start: 125; }
.f9 { grid-column-start: 216; }

.arrow-up { grid-area: 5 / 2; }
.arrow-left { grid-area: 6 / 1; }
.arrow-down { grid-area: 6 / 2; }
.arrow-right { grid-area: 6 / 3; }
.pad-enter { grid-row: span 2; }
.pad-zero { grid-column: span 2; }
```
